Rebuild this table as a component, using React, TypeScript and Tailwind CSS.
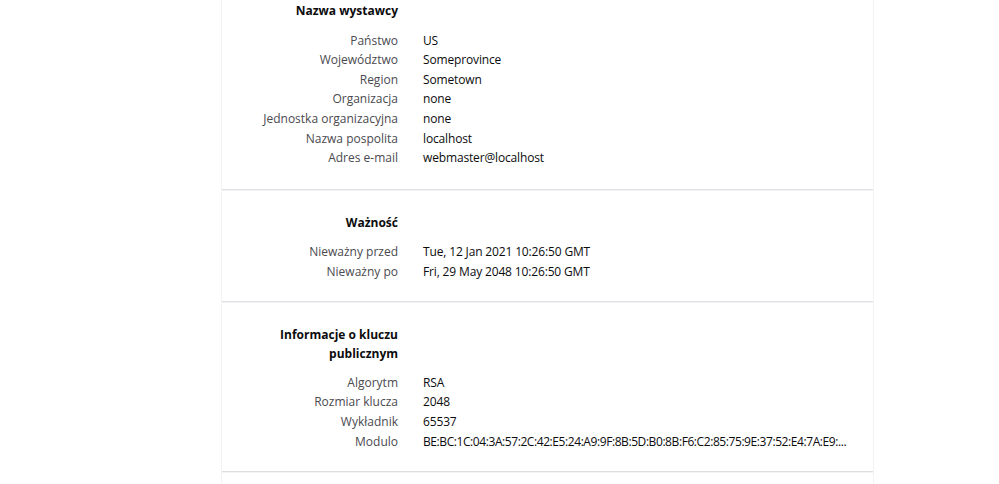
import React from "react";

type Row = [string, string];

const sections: { title: React.ReactNode; rows: Row[]; pt: string; pb: string; mb: string }[] = [
  {
    title: "Nazwa wystawcy",
    pt: "pt-[1px]",
    pb: "pb-[21px]",
    mb: "mb-[10px]",
    rows: [
      ["Państwo", "US"],
      ["Województwo", "Someprovince"],
      ["Region", "Sometown"],
      ["Organizacja", "none"],
      ["Jednostka organizacyjna", "none"],
      ["Nazwa pospolita", "localhost"],
      ["Adres e-mail", "webmaster@localhost"],
    ],
  },
  {
    title: "Ważność",
    pt: "pt-[22px]",
    pb: "pb-[19px]",
    mb: "mb-[10px]",
    rows: [
      ["Nieważny przed", "Tue, 12 Jan 2021 10:26:50 GMT"],
      ["Nieważny po", "Fri, 29 May 2048 10:26:50 GMT"],
    ],
  },
  {
    title: (
      <>
        Informacje o kluczu
        <br />
        publicznym
      </>
    ),
    pt: "pt-[22px]",
    pb: "pb-[20px]",
    mb: "mb-[9px]",
    rows: [
      ["Algorytm", "RSA"],
      ["Rozmiar klucza", "2048"],
      ["Wykładnik", "65537"],
      ["Modulo", "BE:BC:1C:04:3A:57:2C:42:E5:24:A9:9F:8B:5D:B0:8B:F6:C2:85:75:9E:37:52:E4:7A:E9:..."],
    ],
  },
];

export default function App() {
  return (
    <div
      className="w-[999px] h-[484px] overflow-hidden bg-white"
      style={{ fontFamily: '"Open Sans", "Noto Sans", sans-serif' }}
    >
      <div className="ml-[221px] w-[653px] border-x border-[#f3f3f5] min-h-[484px] bg-white">
        {sections.map((s, i) => (
          <div key={i}>
            <div className={`${s.pt} ${s.pb}`}>
              <div className="grid grid-cols-[176px_1fr] gap-x-[25px] pr-[20px] text-[12px] leading-[19.6px]">
                <div className={`text-right font-bold text-[#0c0c0d] ${s.mb}`}>{s.title}</div>
                <div />
                {s.rows.map(([k, v]) => (
                  <React.Fragment key={k}>
                    <div className="text-right text-[#4a4a4f] whitespace-nowrap">{k}</div>
                    <div
                      className={`text-[#0c0c0d] whitespace-nowrap ${
                        k === "Modulo" ? "tracking-[-0.42px]" : "tracking-[-0.15px]"
                      }`}
                    >
                      {v}
                    </div>
                  </React.Fragment>
                ))}
              </div>
            </div>
            <div className="h-[2px] border-t border-[#dedee3] bg-[#f4f4f6]" />
          </div>
        ))}
      </div>
    </div>
  );
}
